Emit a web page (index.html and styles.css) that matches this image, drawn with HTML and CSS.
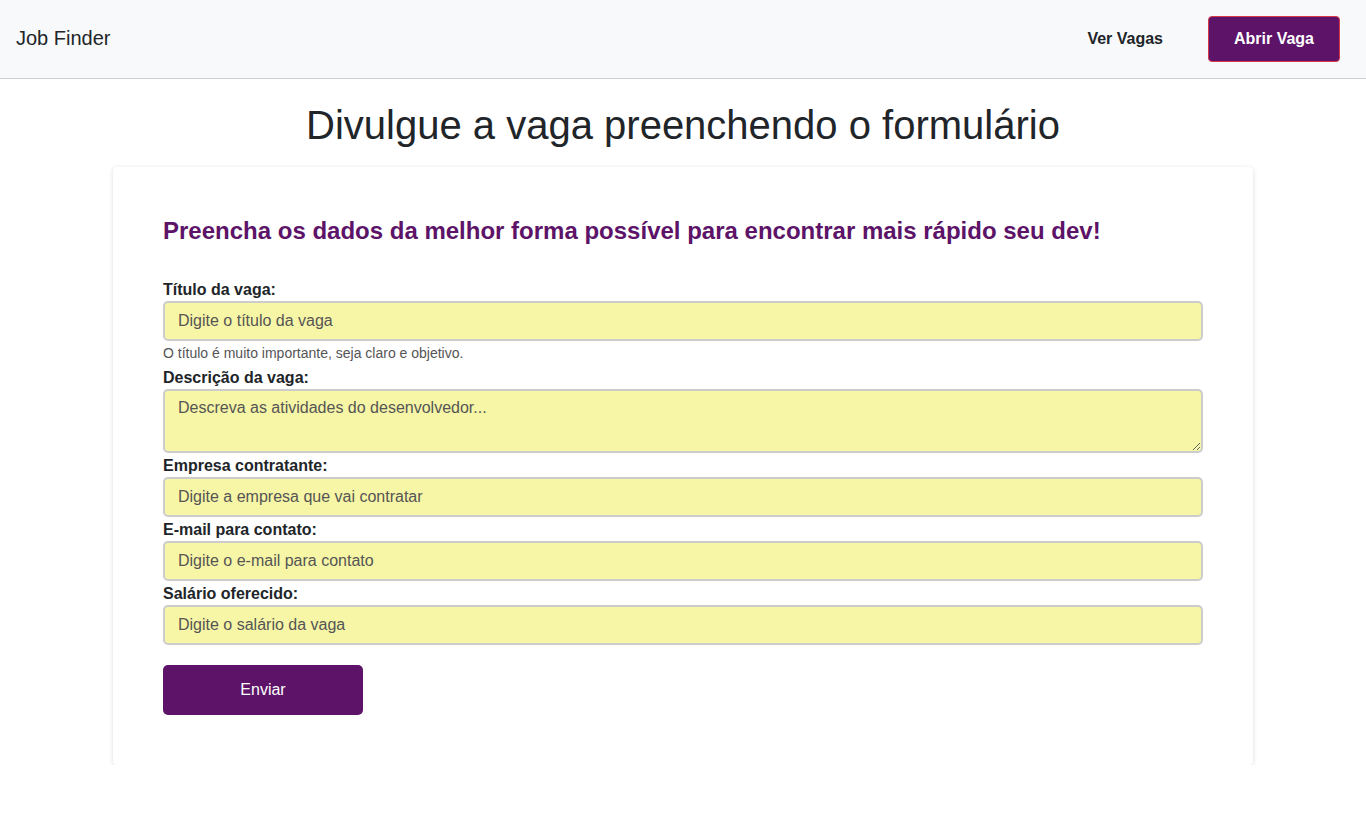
FILE: index.html
```html
<!DOCTYPE html>
<html lang="pt-BR">
<head>
<meta charset="utf-8">
<title>Job Finder</title>
<link rel="stylesheet" href="styles.css">
</head>
<body>
<header class="navbar">
  <a class="brand" href="#">Job Finder</a>
  <nav class="nav">
    <a class="nav-link" href="#">Ver Vagas</a>
    <a class="nav-btn" href="#">Abrir Vaga</a>
  </nav>
</header>
<main class="main">
  <h1 class="page-title">Divulgue a vaga preenchendo o formulário</h1>
  <section class="card">
    <h2 class="card-title">Preencha os dados da melhor forma possível para encontrar mais rápido seu dev!</h2>
    <form class="form">
      <label class="label" for="title">Título da vaga:</label>
      <input class="field" id="title" type="text" placeholder="Digite o título da vaga">
      <small class="help">O título é muito importante, seja claro e objetivo.</small>
      <label class="label" for="desc">Descrição da vaga:</label>
      <textarea class="field area" id="desc" placeholder="Descreva as atividades do desenvolvedor..."></textarea>
      <label class="label" for="company">Empresa contratante:</label>
      <input class="field" id="company" type="text" placeholder="Digite a empresa que vai contratar">
      <label class="label" for="email">E-mail para contato:</label>
      <input class="field" id="email" type="text" placeholder="Digite o e-mail para contato">
      <label class="label" for="salary">Salário oferecido:</label>
      <input class="field" id="salary" type="text" placeholder="Digite o salário da vaga">
      <button class="submit" type="button">Enviar</button>
    </form>
  </section>
</main>
</body>
</html>
```
FILE: styles.css
```css
* { box-sizing: border-box; }
html, body { margin: 0; padding: 0; }
body {
  font-family: "Liberation Sans", Arial, sans-serif;
  color: #212529;
  background: #fff;
}
.navbar {
  height: 79px;
  background: #f8f9fa;
  border-bottom: 1px solid #cfcfcf;
  display: flex;
  align-items: center;
  justify-content: space-between;
  padding: 0 26px 0 16px;
}
.brand {
  color: #212529;
  text-decoration: none;
  font-size: 20px;
  padding-bottom: 1px;
}
.nav {
  display: flex;
  align-items: center;
  gap: 45px;
}
.nav-link {
  color: #212529;
  text-decoration: none;
  font-weight: bold;
  font-size: 16px;
  padding-bottom: 1px;
}
.nav-btn {
  width: 132px;
  height: 46px;
  display: flex;
  align-items: center;
  justify-content: center;
  background: #5c1368;
  border: 1px solid #d6384a;
  border-radius: 4px;
  color: #fff;
  font-weight: bold;
  font-size: 16px;
  text-decoration: none;
  margin-bottom: 1px;
}
.main {
  display: flex;
  flex-direction: column;
  align-items: center;
}
.page-title {
  margin: 22px 0 0;
  font-weight: normal;
  font-size: 40px;
  line-height: 48px;
  height: 66px;
}
.card {
  width: 1140px;
  background: #fff;
  border-radius: 4px;
  box-shadow: 0 1px 5px rgba(0,0,0,0.14);
  padding: 50px 50px 50px;
}
.card-title {
  margin: 0 0 36px;
  color: #5c1368;
  font-size: 24px;
  line-height: 28px;
  font-weight: bold;
}
.form {
  display: flex;
  flex-direction: column;
  align-items: flex-start;
  width: 1040px;
}
.label {
  font-weight: bold;
  font-size: 16px;
  line-height: 17px;
  margin-bottom: 3px;
}
.field {
  width: 1040px;
  height: 40px;
  background: #f7f6a6;
  border: 2px solid #cccccc;
  border-radius: 5px;
  padding: 0 13px;
  font-family: "Liberation Sans", Arial, sans-serif;
  font-size: 16px;
  color: #333;
  margin-bottom: 4px;
}
.field::placeholder { color: #555; opacity: 1; }
.area {
  height: 64px;
  padding: 8px 13px;
  resize: vertical;
  display: block;
}
.help {
  font-size: 14px;
  color: #555;
  line-height: 16px;
  margin: 0 0 8px;
}
.submit {
  margin-top: 16px;
  width: 200px;
  height: 50px;
  background: #5c1368;
  color: #fff;
  border: none;
  border-radius: 5px;
  font-family: "Liberation Sans", Arial, sans-serif;
  font-size: 16px;
}
```
